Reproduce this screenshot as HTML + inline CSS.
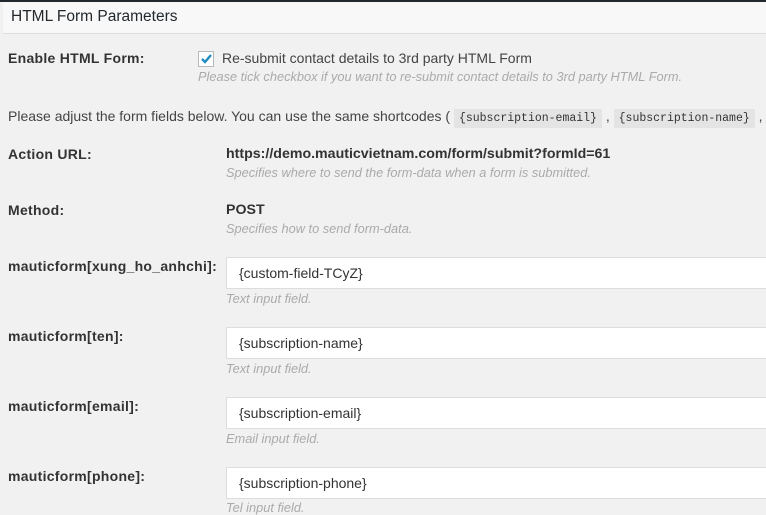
<!DOCTYPE html>
<html><head><style>
body{margin:0;width:766px;height:511px;overflow:hidden;background:#f1f1f1;font-family:"Liberation Sans",Arial,sans-serif;color:#444;position:relative}
.a{position:absolute;white-space:nowrap}
.top{left:0;top:0;width:766px;height:2px;background:#23282d}
.hd{left:3px;top:2px;width:763px;height:31px;background:#f8f8f8;border-bottom:1px solid #ddd}
.hd span{position:absolute;left:8px;top:6px;font-size:15.5px;color:#23282d}
.l{left:8px;font-size:14px;font-weight:bold;color:#333;letter-spacing:.28px}
.d{font-size:12.8px;font-style:italic;color:#aaa}
.t{font-size:14px;color:#444}
.v{left:226px;font-size:14.2px;font-weight:bold;color:#333}
.in{left:226px;width:545px;height:32px;background:#fff;border:1px solid #ddd;box-sizing:border-box;font-size:14px;color:#333;padding:7px 0 0 12px}
code{font-family:"Liberation Mono","DejaVu Sans Mono",monospace;font-size:11.5px;background:#e4e4e4;padding:3px 5px;color:#333}
.cb{left:198px;top:51px;width:16px;height:16px;border:1px solid #b4b9be;background:#fff;box-sizing:border-box}
</style></head><body>
<div class="a top"></div>
<div class="a hd"><span>HTML Form Parameters</span></div>
<div class="a l" style="top:50px">Enable HTML Form:</div>
<div class="a cb"><svg width="14" height="14" viewBox="0 0 14 14" style="position:absolute;left:0;top:0"><path d="M3 7 L6 10 L12 3" stroke="#1e8cbe" stroke-width="2.4" fill="none"/></svg></div>
<div class="a t" style="left:222px;top:50px">Re-submit contact details to 3rd party HTML Form</div>
<div class="a d" style="left:198px;top:69px">Please tick checkbox if you want to re-submit contact details to 3rd party HTML Form.</div>
<div class="a t" style="left:8px;top:108px">Please adjust the form fields below. You can use the same shortcodes ( <code>{subscription-email}</code> , <code>{subscription-name}</code> ,</div>
<div class="a l" style="top:146px">Action URL:</div>
<div class="a v" style="top:146px">https://demo.mauticvietnam.com/form/submit?formId=61</div>
<div class="a d" style="left:226px;top:165px">Specifies where to send the form-data when a form is submitted.</div>
<div class="a l" style="top:202px">Method:</div>
<div class="a v" style="top:202px">POST</div>
<div class="a d" style="left:226px;top:221px">Specifies how to send form-data.</div>
<div class="a l" style="top:258px">mauticform[xung_ho_anhchi]:</div>
<div class="a in" style="top:257px">{custom-field-TCyZ}</div>
<div class="a d" style="left:226px;top:291px">Text input field.</div>
<div class="a l" style="top:328px">mauticform[ten]:</div>
<div class="a in" style="top:327px">{subscription-name}</div>
<div class="a d" style="left:226px;top:361px">Text input field.</div>
<div class="a l" style="top:398px">mauticform[email]:</div>
<div class="a in" style="top:397px">{subscription-email}</div>
<div class="a d" style="left:226px;top:431px">Email input field.</div>
<div class="a l" style="top:468px">mauticform[phone]:</div>
<div class="a in" style="top:467px">{subscription-phone}</div>
<div class="a d" style="left:226px;top:500px">Tel input field.</div>
</body></html>
